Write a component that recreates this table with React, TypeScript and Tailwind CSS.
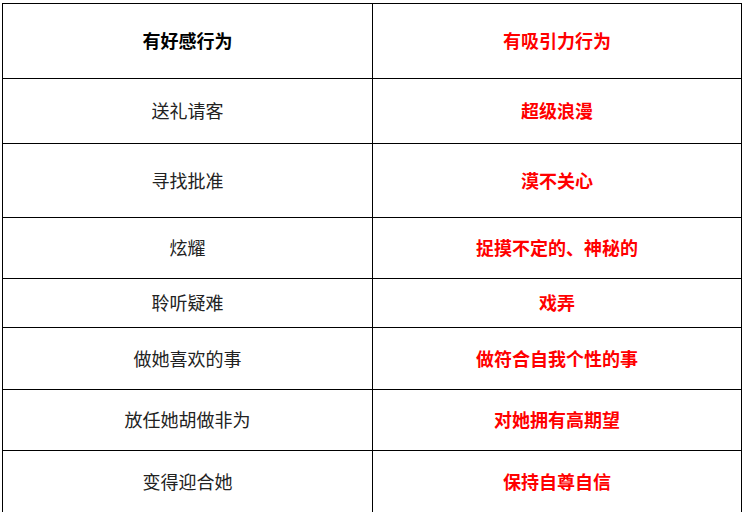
const rows = [
  { left: "有好感行为", right: "有吸引力行为", h: "h-[75px]", head: true },
  { left: "送礼请客", right: "超级浪漫", h: "h-[65px]" },
  { left: "寻找批准", right: "漠不关心", h: "h-[74px]" },
  { left: "炫耀", right: "捉摸不定的、神秘的", h: "h-[61px]" },
  { left: "聆听疑难", right: "戏弄", h: "h-[49px]" },
  { left: "做她喜欢的事", right: "做符合自我个性的事", h: "h-[62px]" },
  { left: "放任她胡做非为", right: "对她拥有高期望", h: "h-[61px]" },
  { left: "变得迎合她", right: "保持自尊自信", h: "h-[62px]" },
];

export default function App() {
  return (
    <div className="min-h-screen bg-white pt-[3px] pl-[2px] font-['Noto_Sans_CJK_SC',serif] text-[18px] leading-none">
      <div className="w-[740px] border-t border-l border-black">
        {rows.map((row, i) => (
          <div key={i} className="flex">
            <div
              className={`${row.h} w-[370px] flex items-center justify-center pb-[2px] border-r border-b border-black ${
                row.head ? "font-bold text-black" : "text-[#222]"
              }`}
            >
              {row.left}
            </div>
            <div
              className={`${row.h} w-[369px] flex items-center justify-center pb-[2px] border-r border-b border-black font-bold text-[#ff0000]`}
            >
              {row.right}
            </div>
          </div>
        ))}
      </div>
    </div>
  );
}
